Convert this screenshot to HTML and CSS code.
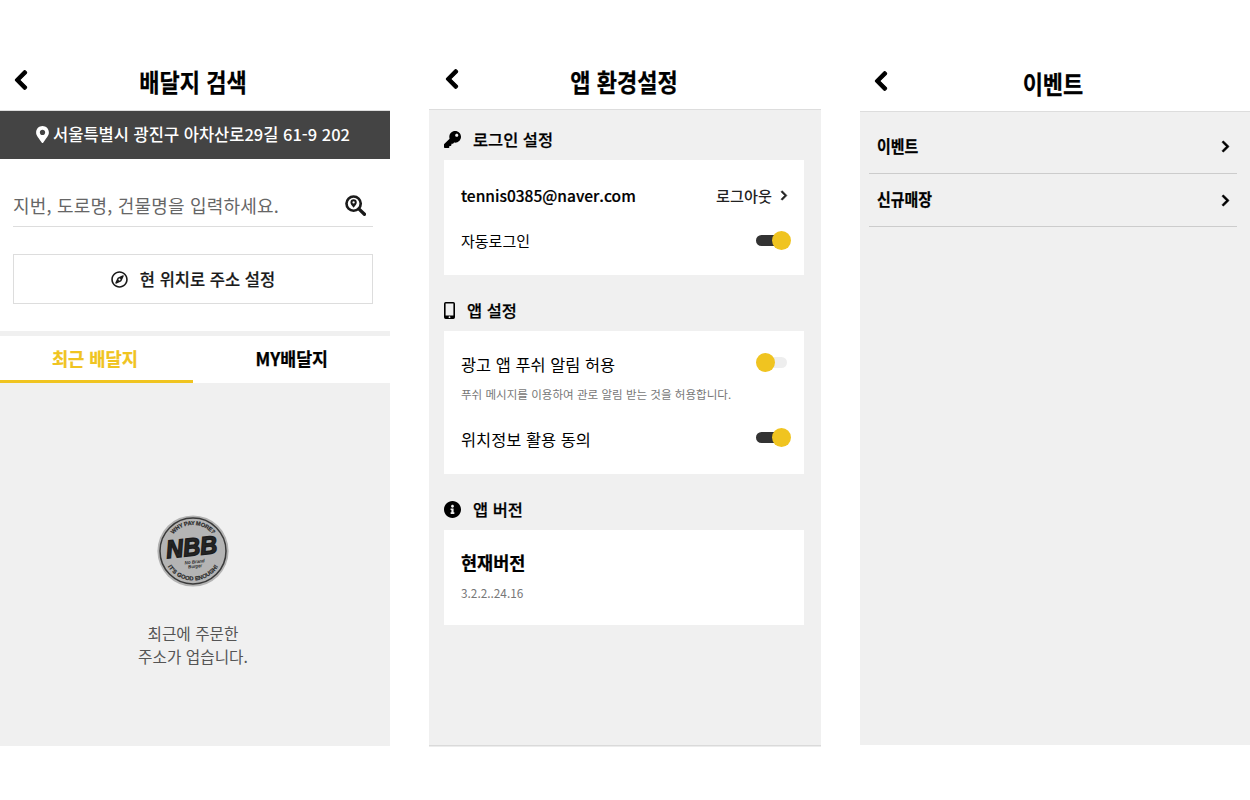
FILE: index.html
```html
<!DOCTYPE html>
<html lang="ko">
<head>
<meta charset="utf-8">
<title>NBB</title>
<link rel="stylesheet" href="styles.css">
</head>
<body>
<svg class="defs" aria-hidden="true">
  <symbol id="back" viewBox="0 0 320 512"><path d="M34.52 239.03L228.87 44.69c9.37-9.37 24.57-9.37 33.94 0l22.67 22.67c9.36 9.36 9.37 24.52.04 33.9L131.49 256l154.02 154.75c9.34 9.38 9.32 24.54-.04 33.9l-22.67 22.67c-9.37 9.37-24.57 9.37-33.94 0L34.52 272.97c-9.37-9.37-9.37-24.57 0-33.94z"/></symbol>
  <symbol id="next" viewBox="0 0 320 512"><path transform="translate(320 0) scale(-1 1)" d="M34.52 239.03L228.87 44.69c9.37-9.37 24.57-9.37 33.94 0l22.67 22.67c9.36 9.36 9.37 24.52.04 33.9L131.49 256l154.02 154.75c9.34 9.38 9.32 24.54-.04 33.9l-22.67 22.67c-9.37 9.37-24.57 9.37-33.94 0L34.52 272.97c-9.37-9.37-9.37-24.57 0-33.94z"/></symbol>
</svg>
<main class="screens">
  <section class="screen search-screen">
    <header class="header"><svg class="back"><use href="#back"/></svg><h1 class="title display">배달지 검색</h1></header>
    <div class="address">
      <svg class="pin" viewBox="0 0 384 512"><path d="M172.268 501.67C26.97 291.031 0 269.413 0 192 0 85.961 85.961 0 192 0s192 85.961 192 192c0 77.413-26.97 99.031-172.268 309.67-9.535 13.774-29.93 13.773-39.464 0zM192 272c44.183 0 80-35.817 80-80s-35.817-80-80-80-80 35.817-80 80 35.817 80 80 80z"/></svg>
      <span>서울특별시 광진구 아차산로29길 61-9 202</span>
    </div>
    <div class="finder">
      <div class="field">
        <span>지번, 도로명, 건물명을 입력하세요.</span>
        <svg class="search" viewBox="0 0 20 20"><circle cx="8.2" cy="8.2" r="6.8" fill="none" stroke="currentColor" stroke-width="2.5"/><path d="M13.2 13.2l5.3 5.2" stroke="currentColor" stroke-width="3.2" stroke-linecap="round"/><path fill-rule="evenodd" d="M8.2 12.2C6.2 9.6 5.2 8.6 5.2 7.1a3 3 0 0 1 6 0c0 1.5-1 2.5-3 5.1zM8.2 8.2a1.1 1.1 0 1 0 0-2.2 1.1 1.1 0 0 0 0 2.2z"/></svg>
      </div>
      <div class="locate">
        <svg class="compass" viewBox="0 0 496 512"><path d="M347.94 129.86L203.6 195.83a31.938 31.938 0 0 0-15.77 15.77l-65.97 144.34c-7.61 16.65 9.54 33.81 26.2 26.2l144.34-65.97a31.938 31.938 0 0 0 15.77-15.77l65.97-144.34c7.61-16.66-9.54-33.81-26.2-26.2zm-77.36 148.72c-12.47 12.47-32.69 12.47-45.16 0-12.47-12.47-12.47-32.69 0-45.16 12.47-12.47 32.69-12.47 45.16 0 12.47 12.47 12.47 32.69 0 45.16zM248 8C111.03 8 0 119.03 0 256s111.03 248 248 248 248-111.03 248-248S384.97 8 248 8zm0 448c-110.28 0-200-89.72-200-200S137.72 56 248 56s200 89.72 200 200-89.72 200-200 200z"/></svg>
        <span>현 위치로 주소 설정</span>
      </div>
    </div>
    <nav class="tabs">
      <div class="tab active"><span class="display">최근 배달지</span></div>
      <div class="tab"><span class="display">MY배달지</span></div>
    </nav>
    <div class="empty">
      <svg class="logo" viewBox="0 0 72 72">
        <defs><path id="arcTop" d="M10 36a26 26 0 0 1 52 0"/><path id="arcBottom" d="M6.5 36a29.5 29.5 0 0 0 59 0"/></defs>
        <circle cx="36" cy="36" r="35.6" fill="#b0b0b0"/>
        <circle cx="36" cy="36" r="33" fill="#b1b1b1" stroke="#303030" stroke-width="1.5"/>
        <text class="ring"><textPath href="#arcTop" startOffset="50%" text-anchor="middle" textLength="45">WHY PAY MORE?</textPath></text>
        <text class="ring"><textPath href="#arcBottom" startOffset="50%" text-anchor="middle" textLength="60">IT'S GOOD ENOUGH!</textPath></text>
        <g transform="rotate(-6 36 36)">
          <text class="nbb" x="35" y="40.5" text-anchor="middle" textLength="51" lengthAdjust="spacingAndGlyphs">NBB</text>
          <text class="brand" x="36.5" y="48.5" text-anchor="middle" textLength="20" lengthAdjust="spacingAndGlyphs">No Brand</text>
          <text class="brand" x="36.5" y="53" text-anchor="middle" textLength="14" lengthAdjust="spacingAndGlyphs">Burger</text>
        </g>
      </svg>
      <p class="message">최근에 주문한<br>주소가 업습니다.</p>
    </div>
  </section>

  <section class="screen settings-screen">
    <header class="header"><svg class="back"><use href="#back"/></svg><h1 class="title display">앱 환경설정</h1></header>
    <div class="settings">
      <h2 class="group">
        <svg class="group-icon" viewBox="0 0 512 512"><path d="M512 176.001C512 273.203 433.202 352 336 352c-11.22 0-22.19-1.062-32.827-3.069l-24.012 27.014A23.999 23.999 0 0 1 261.223 384H224v40c0 13.255-10.745 24-24 24h-40v40c0 13.255-10.745 24-24 24H24c-13.255 0-24-10.745-24-24v-78.059c0-6.365 2.529-12.47 7.029-16.971l161.802-161.802C163.108 213.814 160 195.271 160 176 160 78.798 238.797.001 335.999 0 433.488-.001 512 78.511 512 176.001zM336 128c0 26.51 21.49 48 48 48s48-21.49 48-48-21.49-48-48-48-48 21.49-48 48z"/></svg>
        <span>로그인 설정</span>
      </h2>
      <div class="card login">
        <div class="row"><span class="email">tennis0385@naver.com</span><span class="logout">로그아웃 <svg class="small-next"><use href="#next"/></svg></span></div>
        <div class="row"><span class="auto">자동로그인</span><i class="toggle on"></i></div>
      </div>
      <h2 class="group">
        <svg class="group-icon phone" viewBox="0 0 11 17"><path fill-rule="evenodd" d="M1.7 0h7.6A1.7 1.7 0 0 1 11 1.7v13.6A1.7 1.7 0 0 1 9.3 17H1.7A1.7 1.7 0 0 1 0 15.3V1.7A1.7 1.7 0 0 1 1.7 0zM1.6 1.6v11.8h7.8V1.6zM5.5 14.3a.9.9 0 1 0 0 1.8.9.9 0 0 0 0-1.8z"/></svg>
        <span>앱 설정</span>
      </h2>
      <div class="card app">
        <div class="row"><span class="option">광고 앱 푸쉬 알림 허용</span><i class="toggle"></i></div>
        <p class="note push-note">푸쉬 메시지를 이용하여 관로 알림 받는 것을 허용합니다.</p>
        <div class="row"><span class="option">위치정보 활용 동의</span><i class="toggle on"></i></div>
      </div>
      <h2 class="group">
        <svg class="group-icon" viewBox="8 8 496 496"><path d="M256 8C119.043 8 8 119.083 8 256c0 136.997 111.043 248 248 248s248-111.003 248-248C504 119.083 392.957 8 256 8zm0 110c23.196 0 42 18.804 42 42s-18.804 42-42 42-42-18.804-42-42 18.804-42 42-42zm56 254c0 6.627-5.373 12-12 12h-88c-6.627 0-12-5.373-12-12v-24c0-6.627 5.373-12 12-12h12v-64h-12c-6.627 0-12-5.373-12-12v-24c0-6.627 5.373-12 12-12h64c6.627 0 12 5.373 12 12v100h12c6.627 0 12 5.373 12 12v24z"/></svg>
        <span>앱 버전</span>
      </h2>
      <div class="card version">
        <h3 class="current display">현재버전</h3>
        <p class="note">3.2.2..24.16</p>
      </div>
    </div>
  </section>

  <section class="screen event-screen">
    <header class="header"><svg class="back"><use href="#back"/></svg><h1 class="title display">이벤트</h1></header>
    <ul class="events">
      <li class="event"><span class="display">이벤트</span><svg class="next"><use href="#next"/></svg></li>
      <li class="event"><span class="display">신규매장</span><svg class="next"><use href="#next"/></svg></li>
    </ul>
  </section>
</main>
</body>
</html>
```
FILE: styles.css
```css
* { box-sizing: border-box; margin: 0; padding: 0; }
body { width: 1250px; height: 800px; overflow: hidden; background: #fff; color: #000; font: 400 16px/24px "Noto Sans CJK KR", sans-serif; }
svg { display: block; flex: none; fill: currentColor; }
.defs { position: absolute; width: 0; height: 0; }
.screens { display: grid; grid-template-columns: 390px 392px 390px; column-gap: 39px; align-items: start; padding-top: 50px; }
.screen { display: flex; flex-direction: column; background: #f0f0f0; }
.search-screen { height: 696px; }
.settings-screen { height: 697px; border-bottom: 1px solid #ececec; box-shadow: inset 0 -1px #dadada; }
.event-screen { height: 695px; }

.display { font-weight: 700; white-space: nowrap; transform: scaleX(.88); -webkit-text-stroke: .25px currentColor; }
.header { display: grid; grid-template-columns: 14px 1fr 18px; height: 61px; padding: 0 14px; background: #fff; border-bottom: 1px solid #ddd; }
.back { width: 14px; height: 22px; margin-top: 19px; }
.back, .next, .small-next { stroke: currentColor; stroke-width: 24px; overflow: visible; }
.title { font-size: 25px; line-height: 36px; text-align: center; margin-top: 13px; }
.settings-screen .header { height: 60px; padding-left: 16px; }
.settings-screen .back { margin-top: 18px; }
.event-screen .header { height: 62px; }
.event-screen .back { margin-top: 20px; }
.event-screen .title { margin-top: 15px; }

.address { display: flex; align-items: center; justify-content: center; gap: 4px; height: 48px; padding: 0 4px 2px 0; background: #444; color: #fff; font-weight: 500; font-size: 16.5px; white-space: nowrap; }
.pin { width: 13px; height: 17px; }
.finder { height: 172px; padding: 27px 17px 0 13px; background: #fff; color: #1a1a1a; }
.field { display: flex; justify-content: space-between; align-items: center; height: 41px; padding: 0 7px 2px 0; border-bottom: 1px solid #ddd; font-size: 18px; letter-spacing: .2px; }
.field span { color: #666; }
.search { width: 21px; height: 21px; }
.locate { display: flex; align-items: center; justify-content: center; gap: 12px; height: 50px; margin-top: 27px; border: 1px solid #ddd; font-weight: 500; font-size: 16.5px; -webkit-text-stroke: .2px currentColor; }
.compass { width: 17px; height: 17px; }
.tabs { display: grid; grid-template-columns: 193px 197px; height: 52px; border-top: 5px solid #f0f0f0; background: #fff; }
.tab { display: flex; justify-content: center; align-items: center; font-size: 18px; padding-bottom: 4px; }
.tab .display { transform: scaleX(.96); }
.tab.active { color: #f0c420; border-bottom: 3px solid #f0c420; padding: 0 4px 1px 0; }
.tab.active .display { transform: scaleX(.98); }
.empty { display: flex; flex-direction: column; align-items: center; padding: 132px 4px 0 0; color: #555; }
.logo { width: 72px; height: 72px; fill: #1c1c1c; opacity: .95; }
.logo text { font-family: "Liberation Sans", sans-serif; font-weight: 700; }
.ring { font-size: 5.8px; stroke: #1c1c1c; stroke-width: .2px; }
.logo .nbb { font-size: 25px; font-style: italic; stroke: #111; stroke-width: 1.5px; }
.brand { font-size: 4.8px; font-style: italic; }
.message { margin-top: 35px; font-size: 15.7px; line-height: 23px; text-align: center; }

.settings { padding: 14px 17px 0 15px; }
.group { display: flex; align-items: center; gap: 12px; height: 30px; margin-bottom: 6px; font-size: 16.4px; font-weight: 500; -webkit-text-stroke: .25px currentColor; }
.group-icon { width: 17px; height: 17px; }
.phone { width: 11px; }
.card { background: #fff; padding: 0 13px 0 17px; }
.row { display: flex; align-items: center; justify-content: space-between; height: 24px; }
.login { height: 115px; margin-bottom: 20px; padding-top: 23px; }
.email { font-size: 15.5px; font-weight: 500; -webkit-text-stroke: .2px currentColor; }
.logout { display: flex; align-items: center; gap: 8px; padding-right: 3px; font-size: 15.2px; font-weight: 500; color: #222; }
.small-next { width: 8px; height: 11px; }
.login .row + .row { margin-top: 21px; }
.auto { font-size: 15px; padding-top: 2px; }
.toggle { display: flex; align-items: center; width: 35px; height: 19px; }
.toggle::before { content: ""; width: 31px; height: 11px; margin-right: -31px; border-radius: 6px; background: #eee; }
.toggle::after { content: ""; width: 19px; height: 19px; border-radius: 50%; background: #f0c420; z-index: 1; }
.toggle.on::before { background: #333; }
.toggle.on::after { margin-left: 16px; }
.app { height: 143px; margin-bottom: 20px; padding-top: 21px; }
.option { font-size: 16.4px; }
.note { font-size: 11.8px; line-height: 18px; color: #777; }
.push-note { margin: 9px 0 24px; font-size: 11.55px; white-space: nowrap; }
.app .toggle { margin-bottom: 3px; }
.version { height: 95px; padding-top: 20px; }
.current { width: max-content; font-size: 18px; line-height: 24px; transform: scaleX(.97); transform-origin: left; }
.version .note { margin-top: 10px; }

.events { list-style: none; padding: 8px 13px 0 9px; }
.event { display: flex; align-items: center; justify-content: space-between; height: 53px; padding: 0 7px 0 8px; border-bottom: 1px solid #ccc; font-size: 17px; }
.event:first-child { height: 54px; }
.event .display { transform-origin: left; padding-bottom: 2px; }
.next { width: 9px; height: 13px; }
```
